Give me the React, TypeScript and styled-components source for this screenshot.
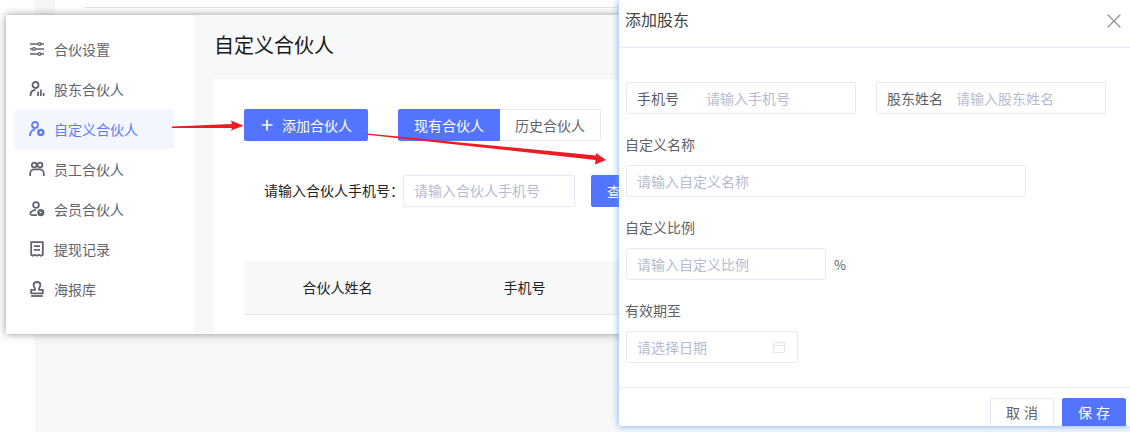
import { createGlobalStyle } from "styled-components";
import styled from "styled-components";
import { Plus, X } from "lucide-react";
import type { ReactNode } from "react";

const primary = "#5274ff";
const border = "#e8eaf3";
const placeholder = "#b5bbd0";

const GlobalStyle = createGlobalStyle`
  html, body {
    margin: 0;
    padding: 0;
    width: 1130px;
    height: 432px;
    overflow: hidden;
    background: #fff;
    font-family: "Noto Sans CJK SC", "Liberation Sans", sans-serif;
    font-size: 14px;
  }
  * { box-sizing: border-box; }
`;

const Page = styled.div`
  position: relative;
  width: 1130px;
  height: 432px;
  overflow: hidden;
  padding-left: 35px;
`;

const Backdrop = styled.div`
  height: 100%;
  background: #f6f7f9;
`;

const BackdropTop = styled.div`
  height: 15px;
  margin-left: 20px;
  padding: 7px 0 0 30px;
  background: #fff;

  &::before {
    content: "";
    display: block;
    height: 1px;
    background: #e4e4e4;
  }
`;

/* captured app window, floating over the page behind it */
const AppWindow = styled.div`
  position: absolute;
  left: 6px;
  top: 15px;
  width: 1124px;
  height: 319px;
  display: flex;
  background: #f7f8fa;
  box-shadow: 0 0 8px rgba(0, 0, 0, 0.42);
`;

const Sidebar = styled.nav`
  width: 188px;
  flex-shrink: 0;
  padding: 14px 8px;
  background: #fff;
  display: flex;
  flex-direction: column;
`;

const NavItem = styled.div<{ $active?: boolean }>`
  width: 160px;
  height: 40px;
  display: flex;
  align-items: center;
  gap: 9px;
  padding-left: 15px;
  border-radius: 4px;
  font-size: 14px;
  color: ${({ $active }) => ($active ? "#5f7cf6" : "#5f6470")};
  background: ${({ $active }) => ($active ? "#f3f6ff" : "transparent")};

  svg {
    width: 16px;
    height: 16px;
    flex-shrink: 0;
    fill: none;
    stroke: currentColor;
    stroke-width: 1.8;
  }
`;

const Content = styled.main`
  flex: 1;
  padding: 0 20px;
  min-width: 0;
`;

const Title = styled.h1`
  margin: 0;
  height: 64px;
  display: flex;
  align-items: center;
  padding: 0 0 5px;
  font-size: 20px;
  font-weight: 400;
  color: #1b1b1b;
`;

const Panel = styled.section`
  height: 255px;
  padding: 30px;
  background: #fff;
  overflow: hidden;
`;

const Toolbar = styled.div`
  display: flex;
  gap: 30px;
`;

const PrimaryButton = styled.button`
  height: 32px;
  border: 0;
  border-radius: 2px;
  background: ${primary};
  color: #fff;
  font: inherit;
  font-size: 14px;
  display: flex;
  align-items: center;
  justify-content: center;
  flex-shrink: 0;
`;

const AddButton = styled(PrimaryButton)`
  width: 124px;
  justify-content: flex-start;
  gap: 7px;
  padding: 0 0 0 15px;
`;

const Segments = styled.div`
  display: flex;
  height: 32px;
  width: 203px;
`;

const Segment = styled.div<{ $active?: boolean }>`
  flex: 1;
  display: flex;
  align-items: center;
  justify-content: center;
  font-size: 14px;
  color: ${({ $active }) => ($active ? "#fff" : "#5f6470")};
  background: ${({ $active }) => ($active ? primary : "#fff")};
  border: 1px solid ${({ $active }) => ($active ? primary : border)};
  border-left-width: ${({ $active }) => ($active ? "1px" : "0")};
  border-radius: ${({ $active }) => ($active ? "2px 0 0 2px" : "0 2px 2px 0")};
`;

const SearchRow = styled.div`
  display: flex;
  align-items: center;
  margin-top: 34px;
  padding-left: 20px;
`;

const SearchLabel = styled.label`
  width: 139px;
  flex-shrink: 0;
  padding-bottom: 2px;
  font-size: 14px;
  color: #222;
  white-space: nowrap;
`;

const TextInput = styled.input<{ $width: number }>`
  width: ${({ $width }) => $width}px;
  height: 32px;
  flex-shrink: 0;
  padding: 0 10px;
  border: 1px solid ${border};
  border-radius: 2px;
  outline: none;
  background: #fff;
  font: inherit;
  font-size: 14px;
  color: #333;

  &::placeholder {
    color: ${placeholder};
    opacity: 1;
  }
`;

const SearchInput = styled(TextInput)`
  padding-bottom: 2px;
`;

const QueryButton = styled(PrimaryButton)`
  width: 64px;
  margin-left: 16px;
  letter-spacing: 2px;
`;

const TableHead = styled.div`
  display: grid;
  grid-template-columns: repeat(4, 187px);
  height: 54px;
  margin-top: 54px;
  background: #f8f8f9;
  border-bottom: 1px solid #e6e6e8;
`;

const HeadCell = styled.div`
  display: flex;
  align-items: center;
  justify-content: center;
  padding-bottom: 2px;
  font-size: 14px;
  color: #222;
`;

const Annotations = styled.svg`
  position: absolute;
  left: 0;
  top: 0;
  pointer-events: none;
`;

const Drawer = styled.aside`
  position: absolute;
  left: 619px;
  top: 0;
  width: 511px;
  height: 426px;
  display: flex;
  flex-direction: column;
  background: #fff;
  overflow: hidden;
`;

const DrawerGlow = styled.div`
  position: absolute;
  left: 619px;
  top: 0;
  width: 511px;
  height: 426px;
  box-shadow: 0 0 7px rgba(86, 156, 255, 0.85);
`;

const DrawerHeader = styled.header`
  height: 48px;
  flex-shrink: 0;
  display: flex;
  align-items: center;
  justify-content: space-between;
  padding: 0 4px 6px 6px;
  border-bottom: 1px solid ${border};

  svg {
    color: #8b8f96;
  }
`;

const DrawerTitle = styled.h2`
  margin: 0 0 4px;
  font-size: 16px;
  font-weight: 400;
  color: #444;
`;

const DrawerBody = styled.div`
  flex: 1;
  padding: 34px 7px 0;
`;

const InlineFields = styled.div`
  display: flex;
  gap: 20px;
`;

const InlineField = styled.div`
  width: 230px;
  height: 32px;
  display: flex;
  align-items: center;
  padding-left: 10px;
  border: 1px solid ${border};
  border-radius: 2px;
`;

const InlineLabel = styled.label`
  width: 69px;
  flex-shrink: 0;
  font-size: 14px;
  color: #5a5e66;
`;

const InlineInput = styled.input`
  flex: 1;
  min-width: 0;
  border: 0;
  outline: none;
  padding: 0;
  font: inherit;
  font-size: 14px;

  &::placeholder {
    color: ${placeholder};
    opacity: 1;
  }
`;

const FieldLabel = styled.label`
  display: block;
  height: 20px;
  line-height: 18px;
  margin: 21px 0 10px -1px;
  font-size: 14px;
  color: #5f6368;
`;

const FieldRow = styled.div`
  display: flex;
  align-items: center;
  gap: 8px;
  font-size: 13px;
  color: #5f6368;
`;

const DateField = styled.div`
  position: relative;
  width: 172px;

  svg {
    position: absolute;
    right: 12px;
    top: 9px;
  }
`;

const DateInput = styled(TextInput)`
  padding-right: 30px;
`;

const DrawerFooter = styled.footer`
  height: 39px;
  flex-shrink: 0;
  display: flex;
  justify-content: flex-end;
  gap: 8px;
  padding: 10px 4px 0 0;
  border-top: 1px solid ${border};
`;

const FooterButton = styled.button<{ $primary?: boolean }>`
  width: 64px;
  height: 32px;
  flex-shrink: 0;
  padding: 0 0 4px;
  border: 1px solid ${({ $primary }) => ($primary ? primary : border)};
  border-radius: 2px;
  background: ${({ $primary }) => ($primary ? primary : "#fff")};
  color: ${({ $primary }) => ($primary ? "#fff" : "#606266")};
  font: inherit;
  font-size: 14px;
  letter-spacing: 4px;
  text-indent: 4px;
`;

const SlidersIcon = () => (
  <svg viewBox="0 0 16 16">
    <path d="M1 3h14M1 8h14M1 13h14" strokeWidth="1.3" />
    <circle cx="10.5" cy="3" r="1.4" fill="#fff" strokeWidth="1.3" />
    <circle cx="5" cy="8" r="1.4" fill="#fff" strokeWidth="1.3" />
    <circle cx="10.5" cy="13" r="1.4" fill="#fff" strokeWidth="1.3" />
  </svg>
);

const ShareholderIcon = () => (
  <svg viewBox="0 0 16 16">
    <circle cx="6.5" cy="4" r="3" />
    <path d="M1.5 15c0-3.8 2-6 5-6" />
    <path d="M9 15v-4.5M11.8 15V8.5M14.6 15v-3" strokeWidth="1.7" />
  </svg>
);

const CustomIcon = () => (
  <svg viewBox="0 0 16 16">
    <circle cx="6" cy="4" r="3" />
    <path d="M1 15c0-4 2-6.2 5-6.2" />
    <circle cx="11.8" cy="11.4" r="3.7" fill="currentColor" stroke="none" />
    <circle cx="11.8" cy="11.4" r="1.2" fill="#fff" stroke="none" />
  </svg>
);

const StaffIcon = () => (
  <svg viewBox="0 0 16 16">
    <circle cx="5.2" cy="4" r="2.4" />
    <circle cx="11" cy="4" r="2.4" />
    <path d="M1.2 15v-2.5c0-2.6 2-4.2 4.2-4.2h5.2c2.2 0 4.2 1.6 4.2 4.2V15" />
  </svg>
);

const MemberIcon = () => (
  <svg viewBox="0 0 16 16">
    <circle cx="7" cy="4" r="2.9" />
    <path d="M8 14.2H3.2C1.4 14.2.8 12.2 2 11c1.2-1.4 3-2.2 5-2.2" />
    <circle cx="11.8" cy="11.6" r="3.6" fill="currentColor" stroke="none" />
    <path d="M10.6 10.6l1.8 1.5" stroke="#fff" strokeWidth="1.1" />
  </svg>
);

const RecordIcon = () => (
  <svg viewBox="0 0 16 16">
    <path d="M2.2 1.2h11.6v12.6l-2.1.9-1.8-.9-1.9.9-1.9-.9-1.8.9-2.1-.9z" />
    <path d="M5 5.2h6M5 8.8h6" />
  </svg>
);

const PosterIcon = () => (
  <svg viewBox="0 0 16 16">
    <path d="M8 1c-2 0-3.4 1.3-3.4 3.1 0 1.4.9 2.2 1.3 3.2.2.5.2 1.1.1 1.6H2.2v3.5h11.6V8.9h-3.8c-.1-.5-.1-1.1.1-1.6.4-1 1.3-1.8 1.3-3.2C11.4 2.3 10 1 8 1z" />
    <path d="M2.2 15h11.6" />
  </svg>
);

const CalendarIcon = () => (
  <svg width="14" height="14" viewBox="0 0 14 14" fill="none" stroke="#e3e6ef" strokeWidth="1">
    <path d="M1.5 2.5h11v10h-11zM1.5 5.5h11M4.5 1v2.5M9.5 1v2.5" />
  </svg>
);

const navItems: { label: string; icon: ReactNode; active?: boolean }[] = [
  { label: "合伙设置", icon: <SlidersIcon /> },
  { label: "股东合伙人", icon: <ShareholderIcon /> },
  { label: "自定义合伙人", icon: <CustomIcon />, active: true },
  { label: "员工合伙人", icon: <StaffIcon /> },
  { label: "会员合伙人", icon: <MemberIcon /> },
  { label: "提现记录", icon: <RecordIcon /> },
  { label: "海报库", icon: <PosterIcon /> },
];

export default function App() {
  return (
    <Page>
      <GlobalStyle />
      <Backdrop>
        <BackdropTop />
      </Backdrop>

      <AppWindow>
        <Sidebar>
          {navItems.map((item) => (
            <NavItem key={item.label} $active={item.active}>
              {item.icon}
              {item.label}
            </NavItem>
          ))}
        </Sidebar>
        <Content>
          <Title>自定义合伙人</Title>
          <Panel>
            <Toolbar>
              <AddButton>
                <Plus size={16} strokeWidth={2.6} />
                添加合伙人
              </AddButton>
              <Segments>
                <Segment $active>现有合伙人</Segment>
                <Segment>历史合伙人</Segment>
              </Segments>
            </Toolbar>
            <SearchRow>
              <SearchLabel>请输入合伙人手机号：</SearchLabel>
              <SearchInput $width={172} placeholder="请输入合伙人手机号" />
              <QueryButton>查询</QueryButton>
            </SearchRow>
            <TableHead>
              <HeadCell>合伙人姓名</HeadCell>
              <HeadCell>手机号</HeadCell>
            </TableHead>
          </Panel>
        </Content>
      </AppWindow>

      <Annotations width="1130" height="432" viewBox="0 0 1130 432">
        <polygon points="172,126.4 232,124 231,120.5 243.5,125.7 231,130.5 232,128 172,128" fill="#ed1c24" />
        <polygon points="367,133.5 596,155.5 596,153 606,160 595,164.5 595.5,160 367,134.8" fill="#ed1c24" />
      </Annotations>

      <DrawerGlow />
      <Drawer>
        <DrawerHeader>
          <DrawerTitle>添加股东</DrawerTitle>
          <X size={24} strokeWidth={1.2} />
        </DrawerHeader>
        <DrawerBody>
          <InlineFields>
            <InlineField>
              <InlineLabel>手机号</InlineLabel>
              <InlineInput placeholder="请输入手机号" />
            </InlineField>
            <InlineField>
              <InlineLabel>股东姓名</InlineLabel>
              <InlineInput placeholder="请输入股东姓名" />
            </InlineField>
          </InlineFields>
          <FieldLabel>自定义名称</FieldLabel>
          <TextInput $width={400} placeholder="请输入自定义名称" />
          <FieldLabel>自定义比例</FieldLabel>
          <FieldRow>
            <TextInput $width={200} placeholder="请输入自定义比例" />%
          </FieldRow>
          <FieldLabel>有效期至</FieldLabel>
          <DateField>
            <DateInput $width={172} placeholder="请选择日期" />
            <CalendarIcon />
          </DateField>
        </DrawerBody>
        <DrawerFooter>
          <FooterButton>取消</FooterButton>
          <FooterButton $primary>保存</FooterButton>
        </DrawerFooter>
      </Drawer>
    </Page>
  );
}
